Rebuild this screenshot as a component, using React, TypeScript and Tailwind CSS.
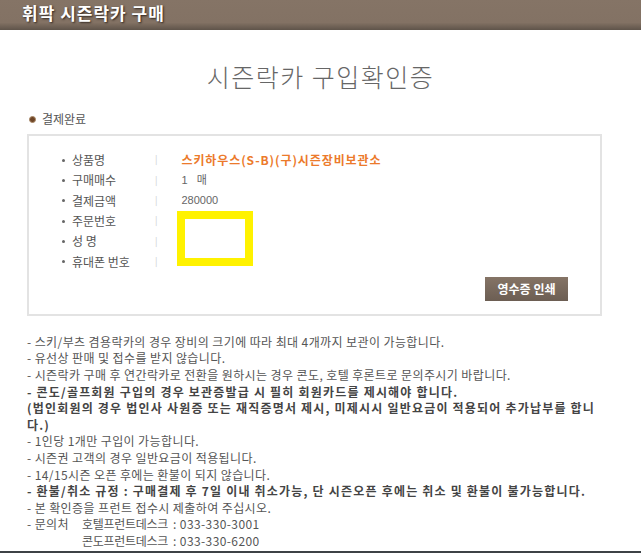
const rows = [
  { label: '상품명', value: '스키하우스(S-B)(구)시즌장비보관소', strong: true },
  { label: '구매매수', value: '1   매' },
  { label: '결제금액', value: '280000' },
  { label: '주문번호', value: '' },
  { label: '성 명', value: '' },
  { label: '휴대폰 번호', value: '' },
]

const notes: { text: string; bold?: boolean }[] = [
  { text: '- 스키/부츠 겸용락카의 경우 장비의 크기에 따라 최대 4개까지 보관이 가능합니다.' },
  { text: '- 유선상 판매 및 접수를 받지 않습니다.' },
  { text: '- 시즌락카 구매 후 연간락카로 전환을 원하시는 경우 콘도, 호텔 후론트로 문의주시기 바랍니다.' },
  { text: '- 콘도/골프회원 구입의 경우 보관증발급 시 필히 회원카드를 제시해야 합니다.', bold: true },
  {
    text: '(법인회원의 경우 법인사 사원증 또는 재직증명서 제시, 미제시시 일반요금이 적용되어 추가납부를 합니다.)',
    bold: true,
  },
  { text: '- 1인당 1개만 구입이 가능합니다.' },
  { text: '- 시즌권 고객의 경우 일반요금이 적용됩니다.' },
  { text: '- 14/15시즌 오픈 후에는 환불이 되지 않습니다.' },
  { text: '- 환불/취소 규정 : 구매결제 후 7일 이내 취소가능, 단 시즌오픈 후에는 취소 및 환불이 불가능합니다.', bold: true },
  { text: '- 본 확인증을 프런트 접수시 제출하여 주십시오.' },
]

const contacts = [
  { name: '호텔프런트데스크', tel: '033-330-3001' },
  { name: '콘도프런트데스크', tel: '033-330-6200' },
  { name: '유스호스텔', tel: '033-330-8001' },
]

const App = () => {
  return (
    <div className="min-h-screen bg-white font-['Noto_Sans_CJK_KR',sans-serif] text-[#555]">
      <div className="h-[30px] bg-gradient-to-b from-[#857466] via-[#837264] via-75% to-[#5f544a] pl-[22px]">
        <h1 className="text-[17px] leading-[25px] font-bold tracking-[1px] text-white [text-shadow:1px_1px_2px_#2e241d]">
          휘팍 시즌락카 구매
        </h1>
      </div>

      <h2 className="mt-[28px] text-center text-[25px] leading-[36px] font-light tracking-[1.5px] text-[#666]">
        시즌락카 구입확인증
      </h2>

      <div className="mt-[16px] flex items-center gap-[6px] pl-[29px] text-[12px] leading-[18px]">
        <span className="h-[7px] w-[7px] rounded-full border border-[#a98866] bg-[#6e4527]" />
        <span>결제완료</span>
      </div>

      <div className="relative mt-[6px] ml-[27px] w-[575px] border-2 border-[#e3e3e3] pt-[14px] pb-[13px]">
        <div className="flex flex-col">
          {rows.map((row) => (
            <div key={row.label} className="flex h-[20.3px] items-center text-[12px]">
              <span className="ml-[33px] h-[3px] w-[3px] rounded-full bg-[#666]" />
              <span className="ml-[7px] w-[83px]">{row.label}</span>
              <span className="text-[9px] text-[#ccc]">|</span>
              <span
                className={
                  row.strong
                    ? 'ml-[24px] font-bold tracking-[0.9px] text-[#ec7a2b]'
                    : "ml-[24px] font-['Liberation_Sans','Noto_Sans_CJK_KR',sans-serif] text-[11px] whitespace-pre text-[#666]"
                }
              >
                {row.value}
              </span>
            </div>
          ))}
        </div>
        <div className="mt-[5px] flex justify-end pr-[32px]">
          <button className="h-[24px] w-[83px] bg-gradient-to-b from-[#857466] to-[#6c5e53] text-[12px] font-bold text-white">
            영수증 인쇄
          </button>
        </div>
        <div className="absolute top-[75px] left-[148px] h-[55px] w-[76px] border-8 border-[#fff200] bg-white" />
      </div>

      <div className="mt-[18px] ml-[27px] w-[575px] text-[12px] leading-[16.6px]">
        {notes.map((n) => (
          <p
            key={n.text}
            className={n.bold ? 'font-bold tracking-[1.2px] text-[#444]' : 'tracking-[0.4px]'}
          >
            {n.text}
          </p>
        ))}
        <div className="flex tracking-[0.4px]">
          <span className="w-[55px]">- 문의처</span>
          <div className="flex flex-col">
            {contacts.map((c) => (
              <div key={c.name} className="flex">
                <span className="w-[91px] tracking-[-0.3px]">{c.name}</span>
                <span>: {c.tel}</span>
              </div>
            ))}
          </div>
        </div>
      </div>

      <div className="fixed right-0 bottom-0 left-0 h-[2px] bg-[#3d4246]" />
    </div>
  )
}

export default App
